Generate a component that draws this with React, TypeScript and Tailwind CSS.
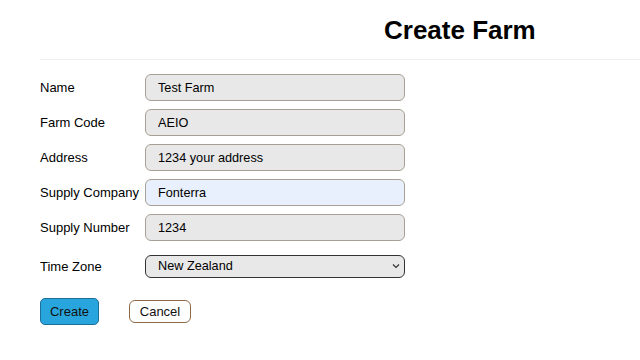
import { useState } from 'react';

const fields = [
  { label: 'Name', value: 'Test Farm' },
  { label: 'Farm Code', value: 'AEIO' },
  { label: 'Address', value: '1234 your address' },
  { label: 'Supply Company', value: 'Fonterra', autofill: true },
  { label: 'Supply Number', value: '1234' },
];

export default function App() {
  const [values, setValues] = useState(fields.map(f => f.value));
  const [zone, setZone] = useState('New Zealand');

  return (
    <div className="w-[640px] h-[360px] bg-white text-[13px] text-black font-['Liberation_Sans',Arial,sans-serif]">

      {/* Header */}
      <div className="pl-[384px] pt-[15px] h-[59px]">
        <h1 className="text-[26px] font-bold leading-[30px]">Create Farm</h1>
      </div>
      <div className="ml-[40px] border-t border-[#eeeeee]" />

      {/* Form */}
      <div className="pl-[40px] pt-[14px] flex flex-col gap-[8px]">
        {fields.map((f, i) => (
          <div key={f.label} className="flex items-center">
            <label className="w-[105px] pt-[1px]">{f.label}</label>
            <input
              value={values[i]}
              onChange={e => setValues(v => v.map((x, j) => (j === i ? e.target.value : x)))}
              className={
                'w-[260px] h-[27px] px-3 rounded-[6px] border border-[#a8a095] outline-none text-[12.7px] ' +
                (f.autofill ? 'bg-[#e8f0fe]' : 'bg-[#e8e8e8]')
              }
            />
          </div>
        ))}

        <div className="flex items-center mt-[6px]">
          <label className="w-[105px] pt-[1px]">Time Zone</label>
          <div className="relative w-[260px] h-[23px]">
            <select
              value={zone}
              onChange={e => setZone(e.target.value)}
              className="appearance-none w-full h-full pl-3 pr-6 rounded-[6px] border-[1.5px] border-[#333333] bg-[#e8e8e8] text-[12.7px] outline-none"
            >
              <option>New Zealand</option>
              <option>Australia</option>
            </select>
            <svg
              className="absolute right-[5px] top-[8px] pointer-events-none"
              width="8" height="6" viewBox="0 0 8 6" fill="none"
            >
              <path d="M1 1.5 L4 4.5 L7 1.5" stroke="#333" strokeWidth="1.2" />
            </svg>
          </div>
        </div>

        <div className="flex items-center gap-[30px] mt-[12px]">
          <button className="w-[59px] h-[27px] rounded-[5px] bg-[#29a5dd] border border-[#1c6f97] text-[#111]">
            Create
          </button>
          <button className="w-[62px] h-[23px] rounded-[6px] bg-white border border-[#8a6a4a] text-[#111]">
            Cancel
          </button>
        </div>
      </div>
    </div>
  );
}
